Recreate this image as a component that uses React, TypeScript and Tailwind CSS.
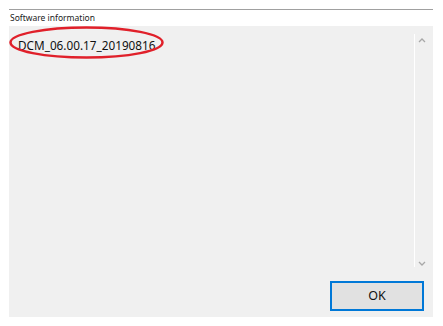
export default function App() {
  return (
    <div
      className="relative w-[443px] h-[326px] bg-white flex flex-col pl-[9px] pr-[10px] pt-[9px] pb-[9px]"
      style={{ fontFamily: '"Noto Sans", "Liberation Sans", sans-serif' }}
    >
      <div className="h-px bg-[#a0a0a0]" />
      <div className="text-[8.5px] leading-[14px] text-[#222] pl-[1px] pt-[1px]">Software information</div>
      <div className="flex-1 bg-[#f0f0f0] flex flex-col mt-[1px]">
        <div className="flex flex-1 pt-[8px] pb-[3px]">
          <div className="flex-1 pl-[9px] pt-[3px] text-[11.75px] leading-[16px] text-[#111]">
            DCM_06.00.17_20190816
          </div>
          <div className="w-px bg-white" />
          <div className="w-[18px] flex flex-col items-center justify-between pr-[4px] pt-[3px]">
            <svg width="8" height="6" viewBox="0 0 8 6">
              <path d="M1 5 L4 2 L7 5" fill="none" stroke="#a8a8a8" strokeWidth="1.3" />
            </svg>
            <svg width="8" height="6" viewBox="0 0 8 6">
              <path d="M1 1 L4 4 L7 1" fill="none" stroke="#a8a8a8" strokeWidth="1.3" />
            </svg>
          </div>
        </div>
        <div className="flex justify-end pr-[9px] pb-[6px] pt-[11px]">
          <button className="w-[94px] h-[30px] bg-[#e1e1e1] border-2 border-[#0078d7] text-[12.5px] text-[#111]">
            OK
          </button>
        </div>
      </div>
      <svg className="absolute left-0 top-0 pointer-events-none" width="443" height="326">
        <ellipse cx="86.5" cy="42.5" rx="76" ry="15" fill="none" stroke="#e0202a" strokeWidth="2.5" />
      </svg>
    </div>
  );
}
